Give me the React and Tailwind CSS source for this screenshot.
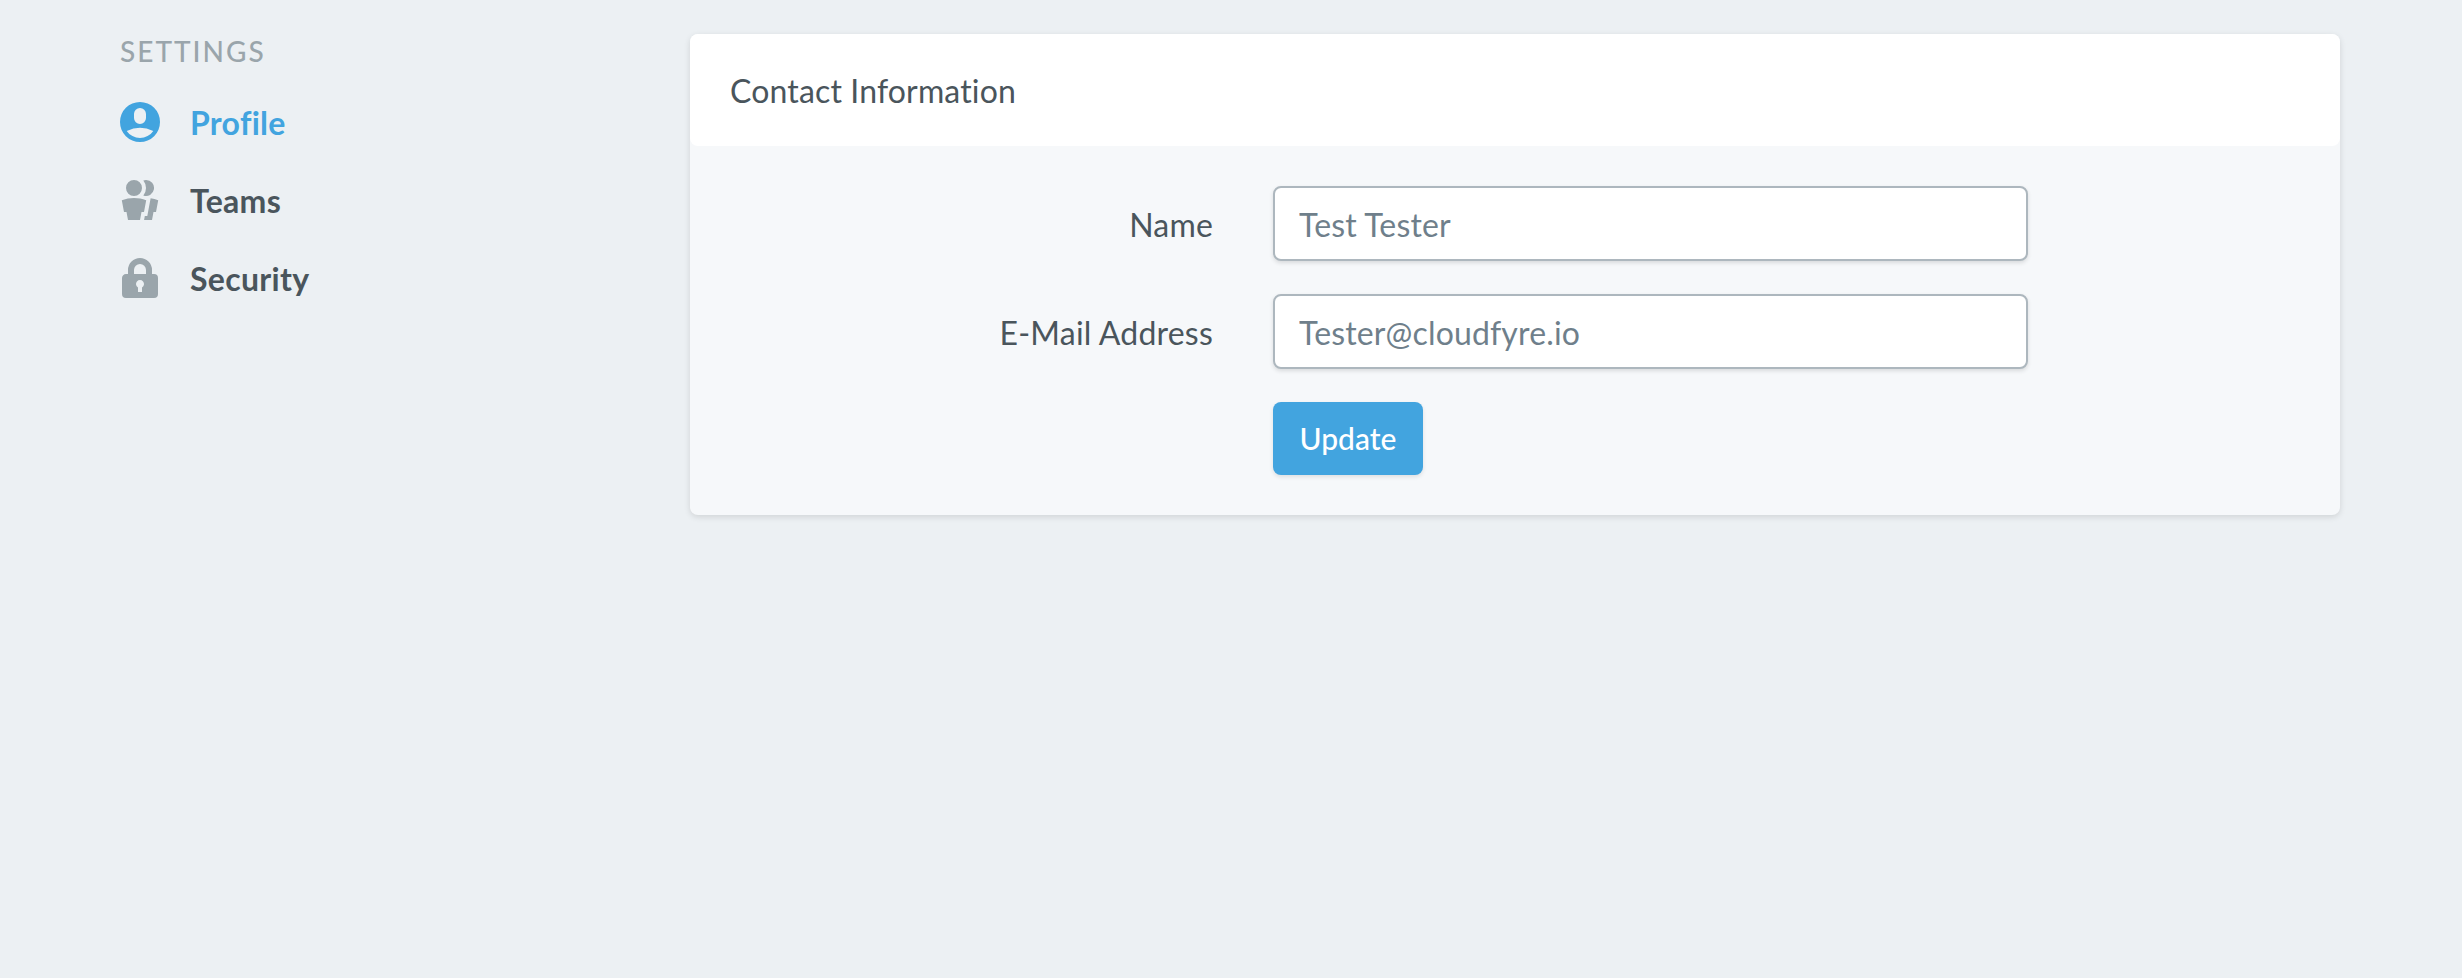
const inputCls = "w-[755px] h-[75px] rounded-[8px] border-2 border-[#adb7be] bg-white pl-[24px] pr-[24px] pt-[2px] text-[32px] tracking-[0.15px] text-[#6f7f8b] shadow-[0_2px_4px_rgba(0,0,0,0.12)] outline-none [font-family:Lato,sans-serif]";

function Icon({ d, className }) {
  return (
    <svg viewBox="0 0 20 20" className={className} fill="currentColor">
      <path d={d} fillRule="evenodd" />
    </svg>
  );
}

const items = [
  { label: "Profile", active: true, d: "M10 20a10 10 0 1 1 0-20 10 10 0 0 1 0 20zM7 6v2a3 3 0 1 0 6 0V6a3 3 0 1 0-6 0zm-3.65 8.44a8 8 0 0 0 13.3 0 15.94 15.94 0 0 0-13.3 0z" },
  { label: "Teams", d: "M7 8a4 4 0 1 1 0-8 4 4 0 0 1 0 8zm0 1c2.15 0 4.2.4 6.1 1.09L12 16h-1.25L10 20H4l-.75-4H2L.9 10.09A17.93 17.93 0 0 1 7 9zm8.31.17c1.32.18 2.59.48 3.8.92L18 16h-1.25L16 20h-3.96l.37-2h1.25l1.65-8.83zM13 0a4 4 0 1 1-1.33 7.76 5.96 5.96 0 0 0 0-7.52C12.1.1 12.53 0 13 0z" },
  { label: "Security", d: "M4 8V6a6 6 0 1 1 12 0v2h1a2 2 0 0 1 2 2v8a2 2 0 0 1-2 2H3a2 2 0 0 1-2-2v-8c0-1.1.9-2 2-2h1zm5 6.73V17h2v-2.27a2 2 0 1 0-2 0zM7 6v2h6V6a3 3 0 0 0-6 0z" },
];

export default function App() {
  return (
    <div className="min-h-[978px] bg-[#ecf0f3] flex pl-[120px] pr-[122px] pt-[34px] [font-family:Lato,sans-serif] text-[#4a555c]">
      <aside className="w-[570px] shrink-0">
        <div className="text-[28px] leading-[28px] tracking-[2px] font-medium text-[#9aa5ab] mt-[3px] mb-[37px]">SETTINGS</div>
        <nav className="flex flex-col gap-[38px]">
          {items.map((it) => (
            <a key={it.label} className={`flex items-center h-[40px] gap-[30px] text-[32px] font-bold tracking-[0.3px] ${it.active ? "text-[#42a4df]" : "text-[#4a555c]"}`}>
              <Icon d={it.d} className={`w-[40px] h-[40px] shrink-0 ${it.active ? "text-[#42a4df]" : "text-[#9aa5ab]"}`} />
              <span className="pt-[1px]">{it.label}</span>
            </a>
          ))}
        </nav>
      </aside>
      <main className="flex-1">
        <div className="rounded-[8px] bg-[#f6f8fa] shadow-[0_2px_6px_rgba(0,0,0,0.12)] pb-[40px]">
          <div className="h-[112px] rounded-[8px] bg-white flex items-center px-[40px] pt-[2px] text-[32px] tracking-[0.15px]">Contact Information</div>
          <form className="pt-[40px] flex flex-col gap-[33px]">
            <div className="flex items-center">
              <label className="w-[523px] pt-[2px] text-right text-[32px] tracking-[0.2px] mr-[60px]">Name</label>
              <input className={inputCls} defaultValue="Test Tester" />
            </div>
            <div className="flex items-center">
              <label className="w-[523px] pt-[2px] text-right text-[32px] tracking-[0.2px] mr-[60px]">E-Mail Address</label>
              <input className={inputCls} defaultValue="Tester@cloudfyre.io" />
            </div>
            <div className="flex">
              <button type="button" className="ml-[583px] w-[150px] h-[73px] rounded-[8px] bg-[#42a4df] text-white text-[30px] font-medium shadow-[0_2px_4px_rgba(0,0,0,0.1)]">Update</button>
            </div>
          </form>
        </div>
      </main>
    </div>
  );
}
